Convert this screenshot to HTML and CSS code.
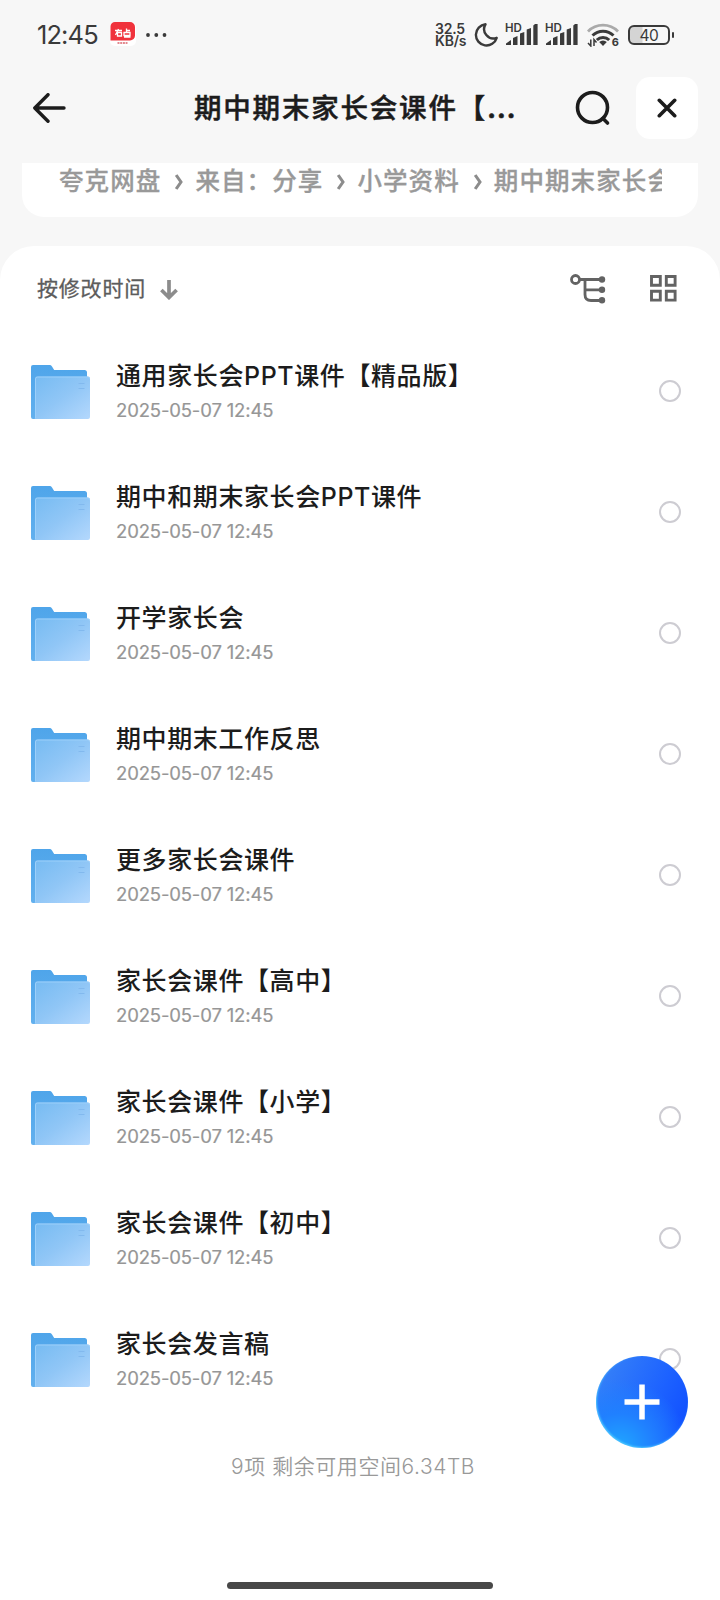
FILE: index.html
```html
<!DOCTYPE html>
<html lang="zh-CN">
<head>
	<meta charset="utf-8">
	<meta name="viewport" content="width=device-width"/>
	<title>期中期末家长会课件</title>
	<link rel="stylesheet" href="styles.css">
</head>
<body>
	<svg width="0" height="0" class="defs">
		<defs>
			<linearGradient id="back" x1="0" y1="0" x2="0" y2="1">
				<stop offset="0" stop-color="#4fa5ea"/>
				<stop offset="1" stop-color="#62b0ee"/>
			</linearGradient>
			<linearGradient id="front" x1="0" y1="0" x2="1" y2="1">
				<stop offset="0" stop-color="#76bbf2"/>
				<stop offset=".5" stop-color="#90c6f6"/>
				<stop offset="1" stop-color="#b4d8fd"/>
			</linearGradient>
		</defs>
		<symbol id="folder" viewBox="0 0 60 54">
			<path fill="url(#back)" d="M2 0h16c1.500 0 2.300.400 3 1.500L23.200 5H53.500a2.500 2.500 0 0 1 2.500 2.500V30L5 54H2a2 2 0 0 1-2-2V2a2 2 0 0 1 2-2z"/>
			<path fill="url(#front)" d="M6 11.500h51a2 2 0 0 1 2 2V52a2 2 0 0 1-2 2H3.500a1.500 1.500 0 0 0 .5-1.500v-39a2 2 0 0 1 2-2z"/>
			<path fill="none" stroke="#9ccffa" d="M4.500 53V14a2 2 0 0 1 2-2h50a2 2 0 0 1 2 2"/>
			<path stroke="#82b9ee" stroke-width="1" d="M47.500 18.500h6M47.500 23.500h6"/>
		</symbol>
		<symbol id="signal" viewBox="0 0 32 22">
			<path fill="#3a3a3a" d="M0 21v-1.500L5 16v5zM7 21v-7l4.500-2v9zM14 21V9.500L18.300 8v13zM20.700 21V5.500L25 4v17zM27.300 21V1.500L29 0h2.600v21z"/>
		</symbol>
	</svg>

	<div class="status">
		<span class="time">12:45</span>
		<svg class="app" width="26" height="24" viewBox="0 0 26 24">
			<rect width="26" height="24" rx="5" fill="#fff"/>
			<path fill="#f0323c" d="M5 0h15a5 5 0 0 1 5 5v8.500a5 5 0 0 1-5 5H.5V4.500A4.500 4.500 0 0 1 5 0z"/>
			<path fill="none" stroke="#fff" stroke-width="1.300" d="M5 8.500h7M8.500 7l-3 6M7.500 10.500h4v3.500h-4zM16.500 6.500v4M16.500 8.500h3.500M14 10.500h6v3h-6zM14 15h6.500"/>
			<path stroke="#d9636b" stroke-width="1.500" stroke-dasharray="2 .7" d="M7.500 21h10"/>
		</svg>
		<svg class="dots" width="21" height="4" viewBox="0 0 21 4"><g fill="#3a3a3a"><circle cx="2" cy="2" r="1.900"/><circle cx="10.300" cy="2" r="1.900"/><circle cx="18.500" cy="2" r="1.900"/></g></svg>
		<div class="right">
			<div class="speed"><div>32.5</div><div>KB/s</div></div>
			<svg class="moon" width="24" height="24" viewBox="0 0 24 24"><path fill="none" stroke="#3a3a3a" stroke-width="2.400" stroke-linejoin="round" d="M11.500 1.300A10.600 10.600 0 1 0 22.700 14.800 9.300 9.300 0 0 1 11.500 1.300z"/></svg>
			<div class="sim"><span class="hd">HD</span><svg width="32" height="22"><use href="#signal"/></svg></div>
			<div class="sim"><span class="hd">HD</span><svg width="32" height="22"><use href="#signal"/></svg></div>
			<div class="wifi">
				<svg width="32" height="24" viewBox="0 0 32 24">
					<path fill="none" stroke="#aaa" stroke-width="2.800" d="M1 8.500a21 21 0 0 1 30 0"/>
					<path fill="none" stroke="#3a3a3a" stroke-width="3" d="M5.500 12.500a15 15 0 0 1 21 0M9.800 17a8.800 8.800 0 0 1 12.400 0"/>
					<path fill="#3a3a3a" d="M16 23l-3.800-4a5.500 5.500 0 0 1 7.600 0z"/>
					<path fill="none" stroke="#3a3a3a" stroke-width="1.500" d="M3.800 16.500V23L1 20M7 23v-6.500l2.500 3"/>
				</svg>
				<span class="gen">6</span>
			</div>
			<div class="battery">40</div>
		</div>
	</div>

	<div class="header">
		<svg class="back" width="34" height="30" viewBox="0 0 34 30"><path fill="none" stroke="#1c1c1c" stroke-width="3.400" stroke-linecap="round" stroke-linejoin="round" d="M31 15H2M15 1.700L1.800 15 15 28.300"/></svg>
		<h1>期中期末家长会课件【<i>...</i></h1>
		<svg class="search" width="36" height="36" viewBox="0 0 36 36"><g fill="none" stroke="#1c1c1c" stroke-width="3.600"><circle cx="17.500" cy="17.500" r="15"/><path stroke-linecap="round" d="M28 28.500l4.500 4.500"/></g></svg>
		<div class="close">
			<svg width="20" height="20" viewBox="0 0 20 20"><path stroke="#1c1c1c" stroke-width="3.600" stroke-linecap="round" d="M2.300 2.300l15.400 15.400M17.700 2.300L2.300 17.700"/></svg>
		</div>
	</div>

	<div class="crumbs">
		<div class="path">
			<span>夸克网盘</span>
			<svg width="8" height="16" viewBox="0 0 8 16"><path d="M1.200 1L6 8l-4.800 7"/></svg>
			<span>来自：分享</span>
			<svg width="8" height="16" viewBox="0 0 8 16"><path d="M1.200 1L6 8l-4.800 7"/></svg>
			<span>小学资料</span>
			<svg width="8" height="16" viewBox="0 0 8 16"><path d="M1.200 1L6 8l-4.800 7"/></svg>
			<span>期中期末家长会</span>
		</div>
	</div>

	<div class="sheet">
		<div class="tools">
			<span class="sort">按修改时间</span>
			<svg class="down" width="18" height="20" viewBox="0 0 18 20"><path fill="none" stroke="#8c8c8c" stroke-width="3.700" d="M9 0v18M1.400 10L9 17.500l7.600-7.500"/></svg>
			<svg class="tree" width="36" height="30" viewBox="0 0 36 30">
				<g fill="none" stroke="#636363" stroke-width="2.800"><circle cx="5.500" cy="5.500" r="4"/><path d="M10 5.500h21M15 5.500v15q0 6 6 6h10M15 15.800h16"/></g>
				<g fill="#636363"><circle cx="32" cy="5.500" r="3.200"/><circle cx="32" cy="15.800" r="3.200"/><circle cx="32" cy="26.300" r="3.200"/></g>
			</svg>
			<svg class="grid" width="27" height="27" viewBox="0 0 27 27"><g fill="none" stroke="#636363" stroke-width="2.900"><path d="M1.500 1.500h8.800v8.800H1.500zM16.300 1.500h8.800v8.800h-8.800zM1.500 16.300h8.800v8.800H1.500zM16.300 16.300h8.800v8.800h-8.800z"/></g></svg>
		</div>

		<ul class="list">
			<li><svg class="folder"><use href="#folder"/></svg><div class="info"><b>通用家长会PPT课件【精品版】</b><em>2025-05-07 12:45</em></div><span class="check"></span></li>
			<li><svg class="folder"><use href="#folder"/></svg><div class="info"><b>期中和期末家长会PPT课件</b><em>2025-05-07 12:45</em></div><span class="check"></span></li>
			<li><svg class="folder"><use href="#folder"/></svg><div class="info"><b>开学家长会</b><em>2025-05-07 12:45</em></div><span class="check"></span></li>
			<li><svg class="folder"><use href="#folder"/></svg><div class="info"><b>期中期末工作反思</b><em>2025-05-07 12:45</em></div><span class="check"></span></li>
			<li><svg class="folder"><use href="#folder"/></svg><div class="info"><b>更多家长会课件</b><em>2025-05-07 12:45</em></div><span class="check"></span></li>
			<li><svg class="folder"><use href="#folder"/></svg><div class="info"><b>家长会课件【高中】</b><em>2025-05-07 12:45</em></div><span class="check"></span></li>
			<li><svg class="folder"><use href="#folder"/></svg><div class="info"><b>家长会课件【小学】</b><em>2025-05-07 12:45</em></div><span class="check"></span></li>
			<li><svg class="folder"><use href="#folder"/></svg><div class="info"><b>家长会课件【初中】</b><em>2025-05-07 12:45</em></div><span class="check"></span></li>
			<li><svg class="folder"><use href="#folder"/></svg><div class="info"><b>家长会发言稿</b><em>2025-05-07 12:45</em></div><span class="check"></span></li>
		</ul>

		<div class="total">9项 剩余可用空间6.34TB</div>
		<div class="homebar"></div>
	</div>

	<div class="fab">
		<svg width="36" height="36" viewBox="0 0 36 36"><path stroke="#fff" stroke-width="5.500" d="M18 .5v35M.5 18h35"/></svg>
	</div>
</body>
</html>
```

FILE: styles.css
```css
*{box-sizing:border-box}
body{
	margin:0;
	width:720px;
	height:1600px;
	overflow:hidden;
	position:relative;
	background:#f7f7f7;
	color:#1c1c1c;
	font-family:Inter, "Noto Sans CJK SC", sans-serif;
}
svg{display:block; flex:none}
.defs{position:absolute}

/* status bar */
.status{
	display:flex;
	align-items:center;
	height:70px;
	padding:0 50px 0 37px;
	color:#3a3a3a;
}
.time{
	width:73px;
	font-size:25.5px;
	line-height:30px;
	letter-spacing:-.9px;
	white-space:nowrap;
	margin-top:-1px;
}
.app{margin-top:-3px}
.dots{margin-left:10px}
.right{
	display:flex;
	align-items:center;
	margin-left:auto;
}
.speed{
	width:39px;
	font-size:14px;
	line-height:12px;
	font-weight:600;
	letter-spacing:-.2px;
	white-space:nowrap;
}
.speed div{height:12.5px}
.moon{margin-right:8px}
.sim{
	position:relative;
	width:33px;
	margin-right:7px;
}
.hd{
	position:absolute;
	left:-1px;
	top:-1px;
	font-size:11.5px;
	line-height:10px;
	font-weight:600;
}
.wifi{
	position:relative;
	margin:0 9px 0 1px;
}
.gen{
	position:absolute;
	right:0;
	bottom:0;
	font-size:11px;
	line-height:9px;
	font-weight:700;
}
.battery{
	position:relative;
	width:42px;
	height:20px;
	border:2px solid #3a3a3a;
	border-radius:6px;
	background:linear-gradient(90deg, #d4d4d4 12px, #f7f7f7 13px);
	font-size:15.5px;
	line-height:17px;
	letter-spacing:-.4px;
	text-align:center;
}
.battery:after{
	content:"";
	position:absolute;
	right:-6px;
	top:5px;
	width:2.5px;
	height:6px;
	border-radius:1px;
	background:#3a3a3a;
}

/* title bar */
.header{
	display:flex;
	align-items:center;
	height:93px;
	padding:0 22px 17px 33px;
}
h1{
	width:381px;
	margin:0 0 0 127px;
	font-size:27.5px;
	line-height:40px;
	letter-spacing:1.8px;
	font-weight:500;
	-webkit-text-stroke:.5px #1c1c1c;
	white-space:nowrap;
}
h1 i{
	font-style:normal;
	font-weight:700;
	letter-spacing:.6px;
}
.search{margin-right:25px}
.close{
	display:flex;
	align-items:center;
	justify-content:center;
	width:62px;
	height:62px;
	border-radius:14px;
	background:#fff;
}

/* breadcrumb card, cut off by the header */
.crumbs{
	height:54px;
	margin:0 22px 29px;
	padding:0 36px 0 37px;
	border-radius:0 0 22px 22px;
	background:#fff;
}
.path{
	display:flex;
	align-items:center;
	height:37px;
	overflow:hidden;
	color:#999;
	font-size:24.5px;
	line-height:37px;
	letter-spacing:1.1px;
	font-weight:500;
	-webkit-text-stroke:.3px #999;
	white-space:nowrap;
}
.path svg{
	margin:0 12px 0 14px;
	fill:none;
	stroke:#8c8c8c;
	stroke-width:3;
}

/* white sheet */
.sheet{
	display:flex;
	flex-direction:column;
	height:1354px;
	border-radius:34px 34px 0 0;
	background:#fff;
}
.tools{
	display:flex;
	align-items:center;
	height:84px;
	padding:0 43px 0 37px;
	color:#5c5c5c;
}
.sort{
	margin-top:-3px;
	font-size:21px;
	letter-spacing:.8px;
	-webkit-text-stroke:.3px #5c5c5c;
}
.down{margin:3px 0 0 14px}
.tree{margin:2px 1px 0 auto}
.grid{margin:1px 0 0 43px}
.list{
	margin:0;
	padding:0;
	list-style:none;
}
.list li{
	display:flex;
	align-items:center;
	height:121px;
	padding:2px 39px 0 31px;
}
.folder{
	width:60px;
	height:54px;
}
.info{
	flex:1;
	margin-left:25px;
}
.info b{
	display:block;
	font-size:25px;
	line-height:37px;
	letter-spacing:.6px;
	font-weight:500;
	white-space:nowrap;
}
.info em{
	display:block;
	color:#969696;
	font-size:18.5px;
	line-height:30px;
	letter-spacing:-.15px;
	font-style:normal;
	-webkit-text-stroke:.2px #969696;
}
.check{
	width:22px;
	height:22px;
	margin-top:-2px;
	border:2px solid #cdccd2;
	border-radius:50%;
}
.total{
	margin:32px 0 0 231px;
	color:#999;
	font-size:21px;
	line-height:32px;
	letter-spacing:.55px;
	font-weight:350;
	white-space:nowrap;
}
.homebar{
	width:266px;
	height:7px;
	margin:auto auto 11px 227px;
	border-radius:4px;
	background:#484848;
}

/* floating add button */
.fab{
	position:absolute;
	left:596px;
	top:1356px;
	display:flex;
	align-items:center;
	justify-content:center;
	width:92px;
	height:92px;
	border-radius:50%;
	background:radial-gradient(circle at 25% 100%, #20a8ff 0, #2080ff 30%, rgba(32,110,255,0) 60%), linear-gradient(115deg, #3580f8 10%, #1d62ff 60%, #1150ff 90%);
	box-shadow:inset 1px -1px 2px #4cc8ff;
}
```
